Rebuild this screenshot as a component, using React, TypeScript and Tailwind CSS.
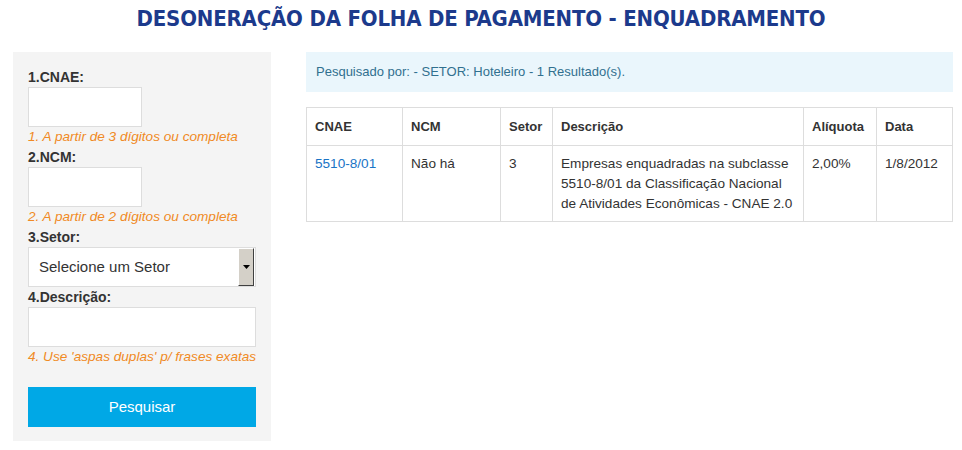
import React from 'react'

const sans = { fontFamily: '"Liberation Sans", Arial, sans-serif' }

function Field({ label, hint, wide }: { label: string; hint?: string; wide?: boolean }) {
    return (
        <div>
            <div className="text-[14px] font-bold leading-[20px] text-[#333]">{label}</div>
            <input className={`block h-[40px] border border-[#ddd] bg-white outline-none ${wide ? 'w-[228px]' : 'w-[114px]'}`} />
            {hint && <div className="whitespace-nowrap text-[13.6px] italic leading-[20px] text-[#f08a24]">{hint}</div>}
        </div>
    )
}

export default function App() {
    return (
        <main className="w-[962px] h-[450px] bg-white" style={sans}>
            <h1
                className="text-center text-[#1c3a8c] text-[22px] leading-[38px] font-bold tracking-[-0.2px]"
                style={{ fontFamily: '"DejaVu Sans Condensed", "DejaVu Sans", sans-serif', fontWeight: 900 }}
            >
                DESONERAÇÃO DA FOLHA DE PAGAMENTO - ENQUADRAMENTO
            </h1>
            <div className="flex gap-[35px] pl-[13px] pt-[14px]">
                <aside className="w-[258px] h-[389px] bg-[#f4f4f4] px-[15px] pt-[15px]">
                    <Field label="1.CNAE:" hint="1. A partir de 3 dígitos ou completa" />
                    <Field label="2.NCM:" hint="2. A partir de 2 dígitos ou completa" />
                    <div>
                        <div className="text-[14px] font-bold leading-[20px] text-[#333]">3.Setor:</div>
                        <div className="flex h-[40px] w-[228px] items-center border border-[#ddd] bg-white">
                            <span className="flex-1 pl-[10px] text-[15px] text-[#333]">Selecione um Setor</span>
                            <span className="mr-[1px] flex h-[38px] w-[16px] items-center justify-center border border-t-white border-l-white border-r-[#404040] border-b-[#404040] bg-[#d4d0c8]">
                                <svg width="7" height="4" viewBox="0 0 7 4"><path d="M0 0h7L3.5 4z" fill="#000" /></svg>
                            </span>
                        </div>
                    </div>
                    <Field label="4.Descrição:" hint="4. Use 'aspas duplas' p/ frases exatas" wide />
                    <button className="mt-[20px] h-[40px] w-[228px] bg-[#00a8e6] text-[15px] text-white">Pesquisar</button>
                </aside>
                <section className="w-[647px]">
                    <div className="h-[40px] bg-[#eaf6fc] pl-[10px] text-[13px] leading-[40px] text-[#31708f]">
                        Pesquisado por: - SETOR: Hoteleiro - 1 Resultado(s).
                    </div>
                    <table className="mt-[15px] w-full border-collapse text-[13.6px] text-[#333]">
                        <thead>
                            <tr className="h-[38px] text-left text-[13px] font-bold">
                                <th className="w-[96px] border border-[#ddd] px-[8px]">CNAE</th>
                                <th className="w-[98px] border border-[#ddd] px-[8px]">NCM</th>
                                <th className="w-[52px] border border-[#ddd] px-[8px]">Setor</th>
                                <th className="w-[251px] border border-[#ddd] px-[8px]">Descrição</th>
                                <th className="w-[73px] border border-[#ddd] px-[8px]">Alíquota</th>
                                <th className="border border-[#ddd] px-[8px]">Data</th>
                            </tr>
                        </thead>
                        <tbody>
                            <tr className="align-top leading-[20px]">
                                <td className="border border-[#ddd] px-[8px] pt-[8px] pb-[7px] text-[#1a74c6]">5510-8/01</td>
                                <td className="border border-[#ddd] px-[8px] pt-[8px]">Não há</td>
                                <td className="border border-[#ddd] px-[8px] pt-[8px]">3</td>
                                <td className="border border-[#ddd] px-[8px] pt-[8px] pb-[7px]">
                                    Empresas enquadradas na subclasse 5510-8/01 da Classificação Nacional de Atividades Econômicas - CNAE 2.0
                                </td>
                                <td className="border border-[#ddd] px-[8px] pt-[8px]">2,00%</td>
                                <td className="border border-[#ddd] px-[8px] pt-[8px]">1/8/2012</td>
                            </tr>
                        </tbody>
                    </table>
                </section>
            </div>
        </main>
    )
}
